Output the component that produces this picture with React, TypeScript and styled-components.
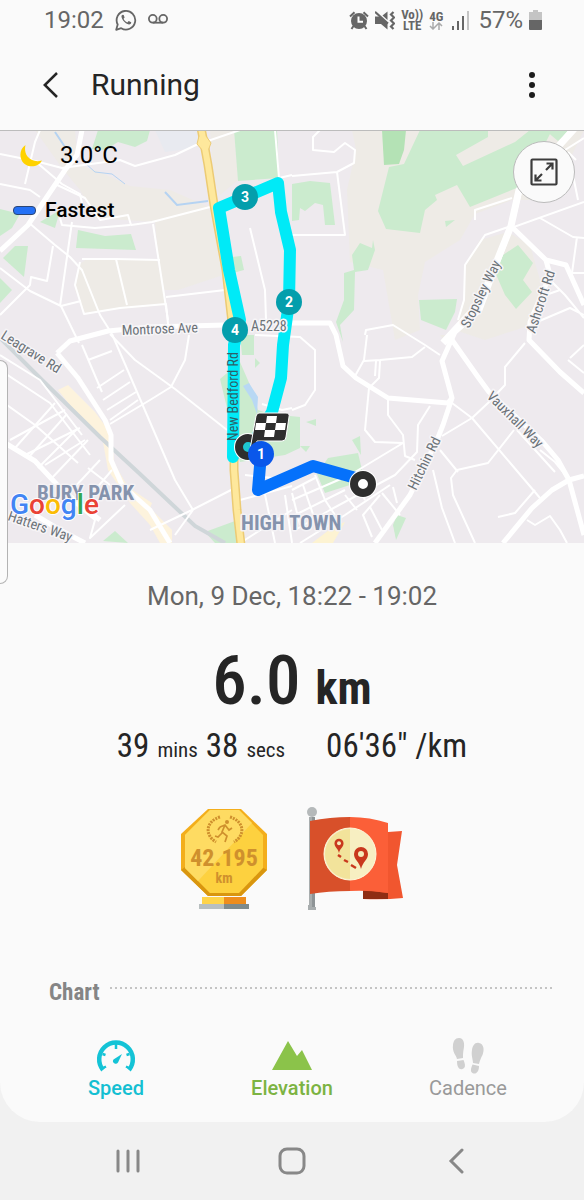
import React from "react";
import styled, { createGlobalStyle } from "styled-components";

const GlobalStyle = createGlobalStyle`
  * { box-sizing: border-box; }
  body { margin: 0; background: #f1f1f1; font-family: Roboto, sans-serif; color: #252525; }
  button { border: 0; padding: 0; background: none; font: inherit; color: inherit; cursor: pointer; }
  h1, h2, p { margin: 0; font-weight: 400; }
  svg { display: block; }
`;

const condensed = `"Roboto Condensed", "Liberation Sans Narrow", Roboto, sans-serif`;

const Phone = styled.div`
  position: relative;
  min-height: 100vh;
  display: flex;
  flex-direction: column;
`;

const Screen = styled.div`
  flex: 1;
  display: flex;
  flex-direction: column;
  background: #fafafa;
  border-radius: 0 0 40px 40px;
`;

const StatusBar = styled.div`
  display: flex;
  justify-content: space-between;
  align-items: center;
  height: 40px;
  padding: 0 42px 0 44px;
  color: #666;
  font-size: 24px;
`;

const StatusGroup = styled.div<{ $gap: number }>`
  display: flex;
  align-items: center;
  gap: ${(p) => p.$gap}px;
`;

const NetworkLabel = styled.div`
  font-family: ${condensed};
  font-size: 13px;
  line-height: 11px;
  font-weight: 700;
  text-align: center;
`;

const Header = styled.header`
  display: flex;
  align-items: center;
  height: 90px;
  padding: 0 40px;
`;

const Title = styled.h1`
  flex: 1;
  font-size: 30px;
  line-height: 40px;
  margin-left: 27px;
`;

const IconButton = styled.button`
  display: flex;
  align-items: center;
  justify-content: center;
  width: 24px;
  height: 40px;
`;

const MapPanel = styled.section`
  position: relative;
  overflow: hidden;
`;

const MapDrawing = styled.svg`
  width: 100%;
  height: auto;
`;

const MapLabels = styled.g`
  font-family: ${condensed};
  paint-order: stroke;
  stroke-width: 3px;
  stroke-linejoin: round;
`;

const MapOverlay = styled.div`
  position: absolute;
  top: 9px;
  left: 13px;
  display: flex;
  flex-direction: column;
  gap: 23px;
  color: #000;
`;

const Weather = styled.div`
  display: flex;
  align-items: center;
  gap: 17px;
  padding-left: 6px;
  font-size: 24px;
  line-height: 32px;
`;

const Legend = styled.div`
  display: flex;
  align-items: center;
  gap: 9px;
  font-size: 21px;
  line-height: 32px;
  font-weight: 500;
`;

const LegendSwatch = styled.span`
  width: 23px;
  height: 9px;
  border: 1px solid #2c4675;
  border-radius: 4px;
  background: #2470f5;
`;

const ExpandButton = styled.button`
  position: absolute;
  top: 11px;
  right: 9px;
  display: flex;
  align-items: center;
  justify-content: center;
  width: 62px;
  height: 62px;
  border: 1px solid #bbb;
  border-radius: 50%;
  background: #fafafa;
`;

const EdgeHandle = styled.div`
  position: absolute;
  top: 360px;
  left: 0;
  width: 8px;
  height: 224px;
  border: 1px solid #b3b3b3;
  border-left: 0;
  border-radius: 0 8px 8px 0;
  background: #fbfbfb;
`;

const Summary = styled.section`
  display: flex;
  flex-direction: column;
  align-items: center;
  padding-top: 37px;
`;

const DateLine = styled.p`
  font-size: 26px;
  line-height: 32px;
  color: #666;
`;

const Distance = styled.p`
  display: flex;
  align-items: baseline;
  gap: 15px;
  margin-top: 29px;
  font-family: ${condensed};
  font-size: 69px;
  line-height: 80px;
  font-weight: 500;
`;

const DistanceUnit = styled.span`
  font-size: 46px;
  line-height: 48px;
  font-weight: 700;
`;

const Stats = styled.div`
  display: flex;
  gap: 41px;
  margin-top: 5px;
  font-family: ${condensed};
  font-size: 33px;
  line-height: 40px;
`;

const Stat = styled.span`
  display: flex;
  align-items: baseline;
  gap: 8px;
`;

const StatUnit = styled.span`
  font-size: 21px;
  line-height: 24px;
`;

const Medals = styled.div`
  display: flex;
  gap: 38px;
  margin-top: 41px;
`;

const ChartHeading = styled.div`
  display: flex;
  align-items: flex-start;
  gap: 10px;
  margin: 68px 30px 0 49px;
`;

const ChartTitle = styled.h2`
  font-family: ${condensed};
  font-size: 23px;
  line-height: 28px;
  font-weight: 700;
  color: #858585;
`;

const DottedRule = styled.span`
  flex: 1;
  height: 2px;
  margin-top: 8px;
  background: linear-gradient(90deg, #c4c4c4 2px, transparent 2px) 0 0 / 5px 2px repeat-x;
`;

const Tabs = styled.div`
  display: grid;
  grid-template-columns: repeat(3, 1fr);
  margin: 31px 28px 20px;
`;

const Tab = styled.button<{ $color: string; $active?: boolean }>`
  position: relative;
  display: flex;
  flex-direction: column;
  align-items: center;
  gap: 1px;
  color: ${(p) => p.$color};
  font-size: 20px;
  line-height: 26px;
  font-weight: ${(p) => (p.$active ? 500 : 400)};

  & + &::before {
    content: "";
    position: absolute;
    left: 0;
    top: 7px;
    width: 1px;
    height: 22px;
    background: #d4d4d4;
  }
`;

const NavBar = styled.nav`
  display: grid;
  grid-template-columns: repeat(3, 1fr);
  height: 78px;
  padding: 0 8%;
`;

const NavButton = styled.button`
  display: flex;
  align-items: center;
  justify-content: center;
`;

type Point = { n: number; x: number; y: number; fill: string };

const splits: Point[] = [
  { n: 3, x: 245, y: 197, fill: "#049eac" },
  { n: 2, x: 289, y: 302, fill: "#049eac" },
  { n: 4, x: 235, y: 330, fill: "#049eac" },
  { n: 1, x: 261, y: 454, fill: "#0a57ea" },
];

const streets = [
  { name: "Leagrave Rd", x: 0, y: 338, angle: 32 },
  { name: "Hatters Way", x: 7, y: 520, angle: 19 },
  { name: "Montrose Ave", x: 122, y: 335, angle: -2 },
  { name: "A5228", x: 251, y: 331, angle: 0 },
  { name: "Stopsley Way", x: 469, y: 329, angle: -64 },
  { name: "Ashcroft Rd", x: 535, y: 334, angle: -72 },
  { name: "Vauxhall Way", x: 486, y: 397, angle: 45 },
  { name: "Hitchin Rd", x: 416, y: 491, angle: -64 },
];

const beige = [
  "M35 130H75L78 165 100 172 130 186 170 190 209 207 223 275 178 290 161 290 155 222 95 218 80 190 62 168Z",
  "M80 264 88 258 157 260 166 305 110 310 85 313 75 290Z",
  "M210 130H234L238 180 220 195 214 180Z",
  "M352 130H584L550 200 512 200 475 214 460 240 425 262 418 295 420 330 395 340 383 270 350 262 347 190 356 150Z",
  "M508 232 480 240 466 265 464 300 455 330 485 340 540 322 540 280 530 245Z",
  "M440 335H452L448 345Z",
];

const greens = [
  "M98 130H150L147 141 135 147 118 142 105 150 92 149Z",
  "M234 130H277L279 178 238 181Z",
  "M78 230 105 236 131 234 136 250 76 248Z",
  "M0 209 20 214 12 228 0 236Z",
  "M15 246 28 246 24 277 3 258Z",
  "M0 278 12 290 0 303Z",
  "M40 222 60 210 55 228Z",
  "M232 257 241 256 244 270 233 273Z",
  "M292 184 310 181 330 183 335 225 325 225 323 205 315 203 305 211 300 208 299 220 292 221Z",
  "M420 130H488V137L456 155 463 166 515 142 530 130H552L524 185 470 207 457 185 435 195 437 200 425 210 420 233 386 229 378 211 389 167 404 164Z",
  "M545 130H570L558 141Z",
  "M445 221 455 220 446 227Z",
  "M352 255 360 243 372 248 373 240 375 250 368 270 355 272 354 310 340 325 343 342 336 322 344 300 344 273 354 270Z",
  "M419 300 457 299 455 312 446 330 421 320Z",
  "M503 255 518 245 533 263 523 280 532 292 516 309 505 295 495 272Z",
  "M240 335H254V355H242Z",
  "M255 358 260 363 255 368Z",
  "M220 379 240 362 250 385 258 410 270 414 300 417 300 448 285 455 240 462Z",
  "M205 532 235 521 237 543 215 543Z",
  "M103 541 115 531 128 543Z",
  "M328 458 358 453 362 470 350 485 325 493 317 474Z",
  "M306 422 316 419 316 426Z",
  "M352 440 360 436 361 455Z",
  "M300 446 310 446 306 452Z",
  "M397 515 406 518 396 540 393 525Z",
];

const majorRoads = [
  "M82 130 77 155 65 170 28 225 0 251",
  "M57 353 70 341 108 331 150 327 225 325",
  "M57 353 78 378 105 420 111 435 111 460 122 485 150 510 170 543",
  "M290 323H330L336 335 343 366 356 378 388 398 448 403 452 398 442 361 450 343 455 332 480 310 511 226 520 190 572 130",
  "M452 398 443 425 437 440 410 495 375 543",
  "M452 340 478 377 489 392 542 441 558 460 569 480 552 490 532 508 503 543",
  "M511 226 546 260 566 265 575 285 584 305",
  "M546 260 550 275 530 322 529 340 560 372 584 393",
  "M569 480 584 476M569 480 584 535",
  "M0 440 35 461 62 490 100 520",
  "M35 515 60 530 85 543",
];

const minorRoads = [
  "M0 154 35 161 62 184 80 194 83 208",
  "M35 161 62 168 120 160 135 166 175 155 196 145 240 130",
  "M40 130 35 142 25 184M0 184 30 190 40 197",
  "M55 184 85 198 100 220 128 215 131 225 152 222 210 207",
  "M28 222 55 245 70 257 82 270 100 315 112 334",
  "M60 218 62 225 95 228 130 225",
  "M72 222 60 306M0 268 30 291 61 306 81 301",
  "M0 315 30 285 31 277 47 281 53 246",
  "M82 259H116L160 260M80 262 75 285 84 314 120 308 166 304 168 324",
  "M116 259 127 305M153 224 168 320",
  "M166 297 225 290M61 306 79 343M112 334 175 480 193 510",
  "M250 228 265 290 266 320M275 130 279 178 292 175",
  "M292 176 337 172 345 235H292M337 172 354 163 355 150 345 143 334 152 313 150 313 137 320 130",
  "M475 220 475 210 512 198",
  "M511 226 485 235 465 265 464 300 458 320",
  "M508 229 584 202M540 218 573 237 584 238M577 237 572 273 584 273",
  "M545 275 565 295 584 318M560 290 540 297M530 325 570 308 584 315",
  "M565 150 584 138M572 170 578 200M568 152 576 160",
  "M110 334 135 360 175 389 227 430M189 335 185 360 171 387 150 400 110 424",
  "M82 345 102 392M88 360 112 351M97 388 124 370M103 400 130 382M107 410 136 392M110 420 138 400",
  "M0 370 50 403 90 455M0 400 35 425 78 463M10 440 65 410M25 455 80 428M45 465 85 440",
  "M55 403 15 448M67 414 28 458M78 428 38 468M88 440 50 480",
  "M0 355 40 380 82 435M88 468 110 485M58 490 95 520 90 538 125 505",
  "M100 460 72 490M150 530 192 510 235 488M193 510 175 535M112 470 95 490",
  "M255 335 300 337 315 350 315 390 305 405 292 410M262 404 282 410 292 408",
  "M367 335 364 360 355 376M364 361 380 360 412 357 425 347M380 361 379 378 369 388 365 430 375 442 403 443",
  "M365 335 366 330 393 325 425 345 440 355M376 361 375 376",
  "M388 400 388 415 403 435 405 456 415 460M430 406 418 425 417 452 395 475 330 510 295 530",
  "M403 443 350 475 292 500M442 436 472 418 488 403 505 385 505 367 525 343",
  "M452 403 472 418 540 498M514 430 488 463 457 470 451 478 453 495 475 543",
  "M440 450 458 472M517 430 555 472M433 470 442 508 455 543M498 517 515 513 535 490",
  "M527 520 535 525 550 516 560 530 567 543M570 358 584 345M568 360 584 373",
  "M315 475 325 500 335 515M292 490 315 478M295 515 345 490M292 493 300 525M303 485 315 520",
  "M300 543 345 515 390 485M345 495 357 510M355 480 365 500M382 493 400 515M393 487 397 503M370 507 382 530M380 495 363 515 372 537",
  "M240 500 292 486M245 475 292 480M260 470 275 543M285 495 292 543M240 543 292 510",
  "M540 450 555 462 568 478",
];

const mainRoad = "M201 128 204 143 208 165 214 205 226 270 234 340 234 470 237 510 241 545";

function RouteMap() {
  return (
    <MapDrawing viewBox="0 130 584 413" role="img" aria-label="Map of the run">
      <rect y="130" width="584" height="413" fill="#eeeaee" />
      <g fill="#eeebe6">
        {beige.map((d) => (
          <path key={d} d={d} />
        ))}
      </g>
      <path d="M155 130H200L195 148 165 152Z" fill="#e8eaf0" />
      <g fill="#cbebce">
        {greens.map((d) => (
          <path key={d} d={d} />
        ))}
      </g>
      <path d="M382 130H406L404 150 399 164 384 165Z" fill="#b4e2b5" />
      <path
        d="M58 390 68 385 95 412 112 435 114 463 128 487 152 503 150 508 172 530V543H160L150 525 130 503 108 470 103 442 85 424Z"
        fill="#fdf3dd"
      />
      <path d="M312 543 333 527 345 522 333 543Z" fill="#fdf3d2" />
      <g fill="none" stroke="#b5d3f2" strokeWidth="2">
        <path d="M55 132 65 147M165 192 177 205 208 201" />
        <path d="M85 163 95 172 112 174 125 184" strokeWidth="1" />
      </g>
      <path d="M243 386 249 383 258 397 257 414 252 400Z" fill="#b8d8f4" />
      <path d="M0 338 40 378 100 437 140 474 195 526 225 543" fill="none" stroke="#cfd6d9" strokeWidth="4" />
      <g fill="none" stroke="#fff" strokeLinejoin="round">
        <g strokeWidth="2">
          {minorRoads.map((d) => (
            <path key={d} d={d} />
          ))}
        </g>
        <g strokeWidth="5">
          {majorRoads.map((d) => (
            <path key={d} d={d} />
          ))}
        </g>
        <path d="M443 343 480 303 511 226 519 190 575 128" strokeWidth="7" />
      </g>
      <path d={mainRoad} fill="none" stroke="#eccb74" strokeWidth="9" />
      <path d="M199 136 197 144 203 151 208 151 211 143 206 136Z" fill="#fee89c" stroke="#eccb74" />
      <path d={mainRoad} fill="none" stroke="#fee89c" strokeWidth="6" />
      <g fill="none" strokeWidth="12" strokeLinecap="round" strokeLinejoin="round">
        <path
          d="M233 457 234 345 240 320 229 270 219 208 245 197 278 183 281 212 290 250 289 302 283 345 281 378 272 412 255 440 245 448"
          stroke="#00eaf7"
        />
        <path d="M261 454 258 490 313 466 363 480" stroke="#0571fb" />
      </g>
      <MapLabels fontSize="14" fill="#6b7277" stroke="#f7f5f7">
        {streets.map((s) => (
          <text key={s.name} transform={`translate(${s.x} ${s.y}) rotate(${s.angle})`}>
            {s.name}
          </text>
        ))}
      </MapLabels>
      <MapLabels fontSize="14" fill="#2d6068" stroke="none">
        <text transform="translate(238 441) rotate(-90)">New Bedford Rd</text>
      </MapLabels>
      <MapLabels fontSize="21" fontWeight="700" fill="#8593ad" stroke="#f4f2f5">
        <text x="37" y="500">BURY PARK</text>
        <text x="241" y="530">HIGH TOWN</text>
      </MapLabels>
      <circle cx="363" cy="484" r="14" fill="#fff" />
      <circle cx="363" cy="484" r="9" fill="#fff" stroke="#2e2e2e" strokeWidth="8" />
      <circle cx="248" cy="447" r="14" fill="#fff" />
      <circle cx="248" cy="447" r="9" fill="#1ec8d2" stroke="#2e2e2e" strokeWidth="8" />
      <path
        d="M259 413H286Q290 413 289 417L286 437Q286 441 282 441H257L253 455H249L256 416Q257 413 259 413Z"
        fill="#2e2e2e"
        stroke="#fff"
      />
      <path
        d="M267 416H277L276 423H286L285 430H275L274 437H264L265 430H255L256 423H266ZM266 423 265 430H275L276 423Z"
        fill="#fff"
        fillRule="evenodd"
      />
      <g fontSize="14" fontWeight="700" textAnchor="middle">
        {splits.map((s) => (
          <g key={s.n}>
            <circle cx={s.x} cy={s.y} r="13" fill={s.fill} />
            <text x={s.x} y={s.y + 5} fill="#fff">
              {s.n}
            </text>
          </g>
        ))}
      </g>
      <text x="10" y="514" fontSize="28" fontWeight="500" stroke="#fff" strokeWidth="2" paintOrder="stroke">
        <tspan fill="#4285f4">G</tspan>
        <tspan fill="#ea4335">o</tspan>
        <tspan fill="#fbbc05">o</tspan>
        <tspan fill="#4285f4">g</tspan>
        <tspan fill="#34a853">l</tspan>
        <tspan fill="#ea4335">e</tspan>
      </text>
      <path d="M0 130H584" stroke="#bcbcbc" strokeWidth="2" />
    </MapDrawing>
  );
}

function WhatsAppIcon() {
  return (
    <svg width="22" height="22" viewBox="0 0 22 22" fill="none" stroke="#666" strokeWidth="1.8">
      <path d="M1.2 20.8 2.7 15.5A9.3 9.3 0 1 1 6.2 19.2Z" strokeLinejoin="round" />
      <path
        d="M7.7 5.7 6.6 6.6C5.6 9 9.8 15.2 14 15.6 15.6 15.4 16.4 14.2 16.2 13.2L13.7 11.9 12.3 13.4C10.6 12.8 9.3 11.4 8.6 9.8L9.6 8.5 8.7 5.9Z"
        fill="#666"
        stroke="none"
      />
    </svg>
  );
}

function VoicemailIcon() {
  return (
    <svg width="20" height="12" viewBox="0 0 20 12" fill="none" stroke="#666" strokeWidth="1.8">
      <circle cx="4.8" cy="4.800" r="3.9" />
      <circle cx="15.2" cy="4.8" r="3.9" />
      <path d="M4.8 8.700H15.2" />
    </svg>
  );
}

function AlarmIcon() {
  return (
    <svg width="20" height="19" viewBox="0 0 20 19">
      <circle cx="10" cy="10" r="8" fill="#666" />
      <path d="M1 5.500 5.500 1.200M19 5.500 14.500 1.200M4.500 15 2.500 18M15.500 15 17.500 18" stroke="#666" strokeWidth="2" />
      <path d="M9.500 5.500V10.800H14" fill="none" stroke="#fff" strokeWidth="2" />
    </svg>
  );
}

function MuteVibrateIcon() {
  return (
    <svg width="20" height="19" viewBox="0 0 20 19">
      <path d="M0 5.500H5L12.500 12V18.500L6 13H0Z" fill="#666" />
      <path d="M7.500 4.500 12.500 .5V9Z" fill="#666" />
      <path d="M0 .8 13 12.500" stroke="#666" strokeWidth="2" />
      <path
        d="M18.500 1 16 3.500 19 6.500 16 9.500 19 12.500 16 15.500 18.500 18"
        fill="none"
        stroke="#666"
        strokeWidth="2.200"
      />
    </svg>
  );
}

function DataArrows() {
  return (
    <svg width="14" height="8" viewBox="0 0 14 8" fill="none" stroke="#aaa" strokeWidth="1.500">
      <path d="M4 0V7M1 4 4 7 7 4M10 8V1M7 4 10 1 13 4" />
    </svg>
  );
}

function SignalIcon() {
  return (
    <svg width="17" height="19" viewBox="0 0 17 19" fill="#666">
      <path d="M0 15H2V19H0ZM5 10H7V19H5ZM10 5H12V19H10Z" />
      <path d="M15 0H17V19H15Z" fill="#c4c4c4" />
    </svg>
  );
}

function BatteryIcon() {
  return (
    <svg width="13" height="20" viewBox="0 0 13 20">
      <path d="M4 0H9V2H13V10H0V2H4Z" fill="#c4c4c4" />
      <path d="M0 10H13V19Q13 20 12 20H1Q0 20 0 19Z" fill="#666" />
    </svg>
  );
}

function MarathonMedal() {
  return (
    <svg width="88" height="104" viewBox="0 0 88 104" role="img" aria-label="Marathon distance medal">
      <path d="M28 2H61L87 27V63L61 89H28L1 63V27Z" fill="#f3ae1c" />
      <path d="M1 63 28 89H61L87 63 82 60 58 86H30L5 60Z" fill="#d9960f" />
      <path d="M30 3H59L83 28V61L59 86H30L5 61V28Z" fill="#fdd13f" />
      <path d="M30 3H59L72 16 18 74 5 61V28Z" fill="#fedb62" />
      <g fill="none" stroke="#cf902d">
        <path d="M40 10C26 14 24 28 36 35M50 10C64 14 66 28 54 35" strokeWidth="3" strokeDasharray="2 1" />
        <path d="M45 18 42 25 47 29 45 35M42 26 38 30 35 29M40 20 45 18 49 23 52 21M40 20 38 23" strokeWidth="1.700" />
      </g>
      <circle cx="47" cy="15" r="2" fill="#cf902d" />
      <g fontFamily={condensed} textAnchor="middle" fontWeight="700" fill="#cf902d">
        <text x="44" y="59" fontSize="24">42.195</text>
        <text x="44" y="76" fontSize="14">km</text>
      </g>
      <path d="M22 90H44V97H22Z" fill="#ffd44a" />
      <path d="M44 90H66V97H44Z" fill="#ee8d1d" />
      <path d="M19 97H44V102H19Z" fill="#b8bfc0" />
      <path d="M44 97H69V102H44Z" fill="#7f8b8c" />
    </svg>
  );
}

function Pin({ x, y, r }: { x: number; y: number; r: number }) {
  return (
    <g transform={`translate(${x} ${y}) scale(${r})`}>
      <path d="M0 20C-2 12-7 11-7 5A7 7 0 0 1 7 5C7 11 2 12 0 20Z" fill="#c9381d" />
      <circle cy="5" r="3" fill="#f5ebba" />
    </g>
  );
}

function RouteFlag() {
  return (
    <svg width="98" height="104" viewBox="0 0 98 104" role="img" aria-label="New route flag">
      <path d="M3 10H9V100H10V103H2V98H3Z" fill="#a8adae" />
      <path d="M6 10H9V100H6Z" fill="#8e9496" />
      <circle cx="6" cy="5" r="5" fill="#b5b9ba" />
      <path d="M57 83H82V25L96 24 91 58 97 91Q78 93 57 92Z" fill="#f1562f" />
      <path d="M57 83 82 86V92H57Z" fill="#8f2d13" />
      <path d="M4 14Q24 10 44 10V84Q22 84 4 87Z" fill="#d8502a" />
      <path d="M44 10Q64 10 82 16V86Q63 83 44 84Z" fill="#fb5f38" />
      <circle cx="44" cy="47" r="26" fill="#f7efc2" stroke="#fff9dc" />
      <path d="M44 22A25 25 0 0 0 44 72Z" fill="#f2e39b" />
      <Pin x={33} y={33} r={0.65} />
      <Pin x={55} y={42} r={1} />
      <path d="M32 48 35 50M38 53 42 55M45 58 50 61" stroke="#c9381d" strokeWidth="2.500" />
    </svg>
  );
}

function SpeedIcon() {
  return (
    <svg width="40" height="36" viewBox="0 0 40 36" fill="none" stroke="#14c3d6">
      <path d="M7 32A16.800 16.800 0 1 1 33 32" strokeWidth="4.500" />
      <path d="M20 5V11M6.500 16 9.500 17M33.500 16 30.500 17M5 31 10 28.500M35 31 30 28.500" strokeWidth="2.500" />
      <path d="M26 16 22 24.500A2.700 2.700 0 1 1 17.500 21.500Z" fill="#14c3d6" stroke="none" />
    </svg>
  );
}

function ElevationIcon() {
  return (
    <svg width="40" height="36" viewBox="0 0 40 36" fill="#8bc34a">
      <path d="M0 32 16 3 25 18 30 12 40 32Z" />
    </svg>
  );
}

function CadenceIcon() {
  return (
    <svg width="34" height="36" viewBox="0 0 34 36" fill="#d0d0d0">
      <path d="M8 0C13 0 14 6 12.500 12 12 15 12 17 12 20L6 21C5 17 1 14 2 7 2.500 3 4 0 8 0Z" />
      <path d="M6 23 12.500 22C15 28 14 30 11.500 31 8 32 6 29 6 23Z" />
      <path d="M28 5C33 6 33.500 12 31.500 17 30 20 29 22 28 26L22 25C22 21 20 18 21 12 21.500 8 24 4 28 5Z" />
      <path d="M21.500 26.500 28 28C28 34 25 36 22.500 35.500 19 34.500 19.500 31 21.500 26.500Z" />
    </svg>
  );
}

export default function App() {
  return (
    <Phone>
      <GlobalStyle />
      <Screen>
        <StatusBar>
          <StatusGroup $gap={11}>
            <span>19:02</span>
            <WhatsAppIcon />
            <VoicemailIcon />
          </StatusGroup>
          <StatusGroup $gap={6}>
            <AlarmIcon />
            <MuteVibrateIcon />
            <NetworkLabel>
              Vo))
              <br />
              LTE
            </NetworkLabel>
            <StatusGroup $gap={9}>
              <NetworkLabel>
                4G
                <DataArrows />
              </NetworkLabel>
              <SignalIcon />
              <span>57%</span>
            </StatusGroup>
            <BatteryIcon />
          </StatusGroup>
        </StatusBar>

        <Header>
          <IconButton aria-label="Back">
            <svg width="18" height="26" viewBox="0 0 18 26" fill="none" stroke="#252525" strokeWidth="2.500">
              <path d="M14 1 1.800 13 14 25" />
            </svg>
          </IconButton>
          <Title>Running</Title>
          <IconButton aria-label="More options">
            <svg width="6" height="26" viewBox="0 0 6 26" fill="#1c1c1c">
              <circle cx="3" cy="3" r="3" />
              <circle cx="3" cy="13" r="3" />
              <circle cx="3" cy="23" r="3" />
            </svg>
          </IconButton>
        </Header>

        <MapPanel>
          <RouteMap />
          <MapOverlay>
            <Weather>
              <svg width="24" height="24" viewBox="0 0 24 24" fill="#ffd200">
                <path d="M6.500 2C0 6 0 16 5 20.500 11 25.500 20 23.500 23 17.500 18 19 12 18 8.500 13.500 6 10 5.500 6 6.500 2Z" />
              </svg>
              3.0°C
            </Weather>
            <Legend>
              <LegendSwatch />
              Fastest
            </Legend>
          </MapOverlay>
          <ExpandButton aria-label="Expand map">
            <svg width="28" height="28" viewBox="0 0 28 28" fill="none" stroke="#3c3c3c" strokeWidth="2.200">
              <rect x="1.500" y="1.500" width="25" height="25" rx="1" />
              <path d="M16 12 22.500 5.500M16.500 5.500H22.500V11.500M12 16 5.500 22.500M5.500 16.500V22.500H11.500" />
            </svg>
          </ExpandButton>
        </MapPanel>

        <Summary>
          <DateLine>Mon, 9 Dec, 18:22 - 19:02</DateLine>
          <Distance>
            6.0
            <DistanceUnit>km</DistanceUnit>
          </Distance>
          <Stats>
            <Stat>
              39
              <StatUnit>mins</StatUnit>
              38
              <StatUnit>secs</StatUnit>
            </Stat>
            <Stat>06'36" /km</Stat>
          </Stats>
          <Medals>
            <MarathonMedal />
            <RouteFlag />
          </Medals>
        </Summary>

        <ChartHeading>
          <ChartTitle>Chart</ChartTitle>
          <DottedRule />
        </ChartHeading>
        <Tabs>
          <Tab $color="#14bfd2" $active>
            <SpeedIcon />
            Speed
          </Tab>
          <Tab $color="#7cb342" $active>
            <ElevationIcon />
            Elevation
          </Tab>
          <Tab $color="#999">
            <CadenceIcon />
            Cadence
          </Tab>
        </Tabs>
      </Screen>

      <NavBar>
        <NavButton aria-label="Recent apps">
          <svg width="24" height="26" viewBox="0 0 24 26" stroke="#888" strokeWidth="3" strokeLinecap="round">
            <path d="M2 3V23M12 3V23M22 3V23" />
          </svg>
        </NavButton>
        <NavButton aria-label="Home">
          <svg width="28" height="28" viewBox="0 0 28 28" fill="none" stroke="#888" strokeWidth="3">
            <rect x="2" y="2" width="24" height="24" rx="7" />
          </svg>
        </NavButton>
        <NavButton aria-label="Back">
          <svg width="16" height="26" viewBox="0 0 16 26" fill="none" stroke="#888" strokeWidth="3" strokeLinecap="round">
            <path d="M14 2 3 13 14 24" />
          </svg>
        </NavButton>
      </NavBar>
      <EdgeHandle />
    </Phone>
  );
}
